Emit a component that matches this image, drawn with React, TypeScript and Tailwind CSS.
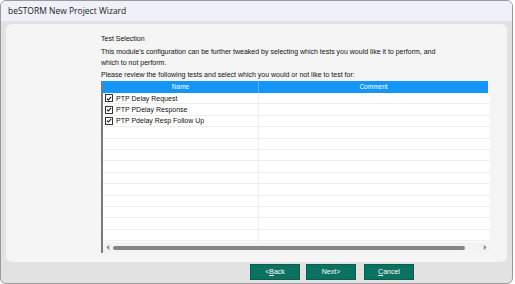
const tests = ['PTP Delay Request', 'PTP PDelay Response', 'PTP Pdelay Resp Follow Up'];
const emptyRows = 11;

function Check() {
  return (
    <span className="flex h-[8px] w-[8px] shrink-0 items-center justify-center border border-[#333] bg-white">
      <svg viewBox="0 0 8 8" className="h-[7px] w-[7px]">
        <path d="M1.2 4.2 L3.2 6 L6.8 1.8" fill="none" stroke="#111" strokeWidth="1.4" />
      </svg>
    </span>
  );
}

function WizButton({ children }: { children: React.ReactNode }) {
  return (
    <button className="flex h-[16px] w-[50px] items-center justify-center border border-[#0a5e50] bg-[#0b7160] text-[7px] text-white">
      {children}
    </button>
  );
}

export default function App() {
  return (
    <div className="h-[284px] w-[515px] bg-white font-['Liberation_Sans',Arial,sans-serif]">
      <div className="flex h-[284px] w-[513px] flex-col overflow-hidden rounded-[6px] border border-[#9a9a9a] bg-[#e2e2e2]">
        {/* title bar */}
        <div className="flex h-[20px] shrink-0 items-center bg-[#eef1f9] pl-[7px] font-['Open_Sans',sans-serif] text-[8.5px] text-[#1a1a1a]">
          beSTORM New Project Wizard
        </div>

        {/* content panel */}
        <div className="mx-[5px] mt-[3px] flex h-[238px] flex-col rounded-[6px] bg-[#f5f5f5] pl-[95px] pr-[16px] pt-[10px] text-[7px] text-[#111]">
          <p className="leading-[10px]">Test Selection</p>
          <p className="mt-[2px] leading-[11px]">
            This module's configuration can be further tweaked by selecting which tests you would like it to perform, and
            <br />
            which to not perform.
          </p>
          <p className="mt-[1px] leading-[11px]">Please review the following tests and select which you would or not like to test for:</p>

          {/* table */}
          <div className="mt-[1px] flex h-[172px] w-[389px] flex-col border-l-2 border-[#7a7a7a] bg-white">
            <div className="flex h-[12px] shrink-0 bg-[#1396f7] text-[6.5px] text-white">
              <div className="flex w-[155px] items-center justify-center">Name</div>
              <div className="flex flex-1 items-center justify-center border-l border-[#4fb0f8]">Comment</div>
              <div className="w-[2px] bg-[#f0f0f0]" />
            </div>
            <div className="flex flex-1 flex-col overflow-hidden">
              {tests.map((t) => (
                <div key={t} className="flex h-[11.4px] shrink-0 border-b border-[#eeeeee]">
                  <div className="flex w-[155px] items-center gap-[3px] pl-[2px]">
                    <Check />
                    <span className="text-[7px] leading-none">{t}</span>
                  </div>
                  <div className="flex-1 border-l border-[#eeeeee]" />
                </div>
              ))}
              {Array.from({ length: emptyRows }).map((_, i) => (
                <div key={i} className="flex h-[11.4px] shrink-0 border-b border-[#eeeeee]">
                  <div className="w-[155px]" />
                  <div className="flex-1 border-l border-[#eeeeee]" />
                </div>
              ))}
            </div>
            {/* horizontal scrollbar */}
            <div className="flex h-[11px] shrink-0 items-center gap-[3px] bg-[#f3f3f3] px-[3px]">
              <svg viewBox="0 0 4 6" className="h-[5px] w-[4px]">
                <path d="M3.5 0 L0 3 L3.5 6 Z" fill="#8a8a8a" />
              </svg>
              <div className="h-[4px] flex-1 rounded-full bg-[#858585]" />
              <div className="w-[12px]" />
              <svg viewBox="0 0 4 6" className="h-[5px] w-[4px]">
                <path d="M0.5 0 L4 3 L0.5 6 Z" fill="#8a8a8a" />
              </svg>
            </div>
          </div>
        </div>

        {/* buttons */}
        <div className="mt-[1px] flex gap-[6px] pl-[249px] pt-[1px]">
          <WizButton>
            &lt;<span className="underline">B</span>ack
          </WizButton>
          <WizButton>Next&gt;</WizButton>
          <div className="ml-[2px]">
            <WizButton>
              <span className="underline">C</span>ancel
            </WizButton>
          </div>
        </div>
      </div>
    </div>
  );
}
